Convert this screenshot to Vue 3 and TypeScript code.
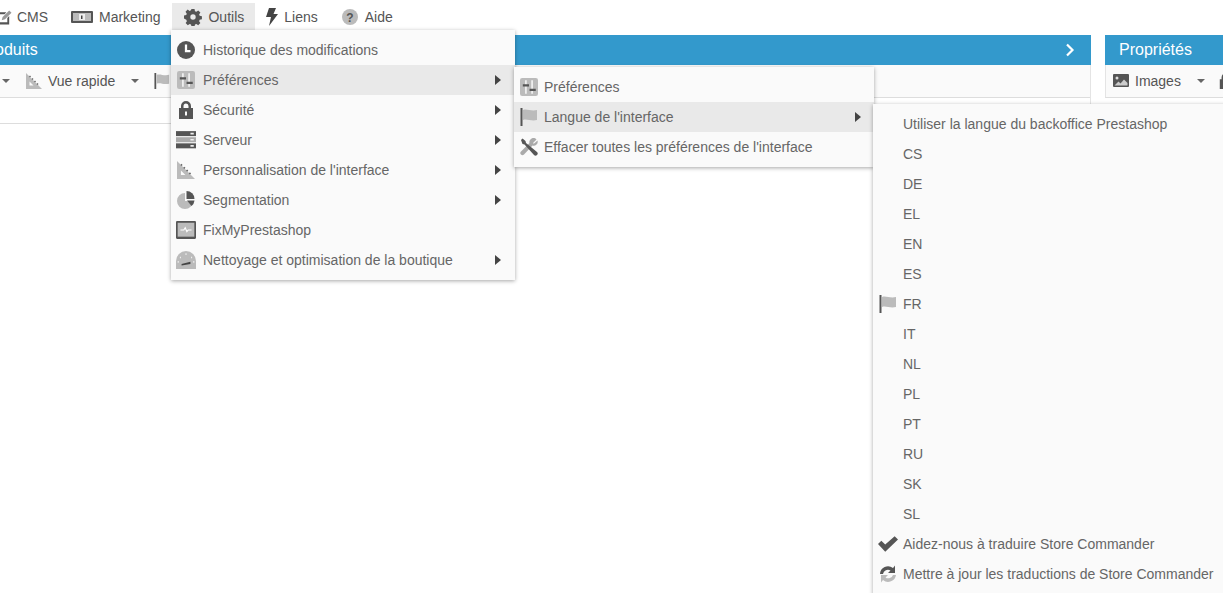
<script setup lang="ts">
interface Row { label: string; icon?: string; more?: boolean; active?: boolean }
const navItems: Row[] = [
  { label: 'CMS', icon: 'edit' },
  { label: 'Marketing', icon: 'money' },
  { label: 'Outils', icon: 'gear', active: true },
  { label: 'Liens', icon: 'bolt' },
  { label: 'Aide', icon: 'help' },
]
const toolsMenu: Row[] = [
  { label: 'Historique des modifications', icon: 'clock' },
  { label: 'Préférences', icon: 'prefs', more: true, active: true },
  { label: 'Sécurité', icon: 'lock', more: true },
  { label: 'Serveur', icon: 'server', more: true },
  { label: "Personnalisation de l'interface", icon: 'ruler', more: true },
  { label: 'Segmentation', icon: 'pie', more: true },
  { label: 'FixMyPrestashop', icon: 'monitor' },
  { label: 'Nettoyage et optimisation de la boutique', icon: 'gauge', more: true },
]
const prefsMenu: Row[] = [
  { label: 'Préférences', icon: 'prefs' },
  { label: "Langue de l'interface", icon: 'flag', more: true, active: true },
  { label: "Effacer toutes les préférences de l'interface", icon: 'tools' },
]
const langMenu: Row[] = [
  { label: 'Utiliser la langue du backoffice Prestashop' },
  ...['CS', 'DE', 'EL', 'EN', 'ES'].map((label) => ({ label })),
  { label: 'FR', icon: 'flag' },
  ...['IT', 'NL', 'PL', 'PT', 'RU', 'SK', 'SL'].map((label) => ({ label })),
  { label: 'Aidez-nous à traduire Store Commander', icon: 'check' },
  { label: 'Mettre à jour les traductions de Store Commander', icon: 'refresh' },
]
const menus = [
  { cls: 'menu-tools', rows: toolsMenu },
  { cls: 'menu-prefs', rows: prefsMenu },
  { cls: 'menu-lang', rows: langMenu },
]
</script>

<template>
  <div class="page">
    <svg class="defs" width="0" height="0" aria-hidden="true">
      <symbol id="edit" viewBox="0 0 16 16">
        <path d="M0 3h10L8 5H2.500v8.500H11V9l2-2v9H0z" fill="#555" />
        <path d="M6 8l7-7 2.500 2.500-7 7-3.500 1z" fill="#999" />
      </symbol>
      <symbol id="money" viewBox="0 0 22 14">
        <rect x="0" y="1" width="22" height="12" rx="1" fill="#555" />
        <rect x="2" y="3" width="18" height="8" fill="#bbb" />
        <rect x="8" y="4" width="6" height="6" fill="#eee" />
        <path d="M10 5.500h1.500V9H10z" fill="#444" />
      </symbol>
      <symbol id="gear" viewBox="0 0 18 18">
        <path fill="#555" fill-rule="evenodd" d="M7.300 0h3.400l.5 2.500 1.500.6 2.100-1.400 2.400 2.400-1.400 2.100.6 1.500 2.500.5v3.400l-2.500.5-.6 1.500 1.400 2.100-2.400 2.400-2.100-1.400-1.500.6-.5 2.500H7.300l-.5-2.500-1.500-.6-2.100 1.400-2.400-2.400 1.400-2.100-.6-1.500L-1 10.700V7.300l2.500-.5.600-1.500-1.400-2.100 2.400-2.400 2.100 1.400 1.500-.6zM9 6a3 3 0 100 6 3 3 0 000-6z" transform="translate(.9 .9) scale(.9)" />
      </symbol>
      <symbol id="bolt" viewBox="0 0 12 18">
        <path d="M3 0h7L7.500 6H12L3 18l2-9H0z" fill="#444" />
      </symbol>
      <symbol id="help" viewBox="0 0 16 16">
        <circle cx="8" cy="8" r="8" fill="#bbb" />
        <text x="8" y="12.500" text-anchor="middle" font-family="Liberation Sans, sans-serif" font-weight="700" font-size="12" fill="#555">?</text>
      </symbol>
      <symbol id="clock" viewBox="0 0 16 16">
        <circle cx="8" cy="8" r="8" fill="#555" />
        <path d="M7 3h2v5h3v2H7z" fill="#fff" />
      </symbol>
      <symbol id="prefs" viewBox="0 0 16 16">
        <rect width="16" height="16" rx="2" fill="#bbb" />
        <path d="M4.500 2h1.500v12H4.500zM10 2h1.500v12H10z" fill="#f2f2f2" />
        <path d="M2.500 5.500h5.500v2H2.500zM8.500 9.500H14v2H8.500z" fill="#555" />
      </symbol>
      <symbol id="lock" viewBox="0 0 18 18">
        <path fill="#555" fill-rule="evenodd" d="M4 7V5a5 5 0 0110 0v2h2v11H2V7zM6.500 7h5V5a2.500 2.500 0 00-5 0zM8 10.500v4h2v-4z" />
      </symbol>
      <symbol id="server" viewBox="0 0 18 16">
        <rect y="0" width="18" height="4.500" fill="#555" />
        <rect y="5.500" width="18" height="4.500" fill="#aaa" />
        <rect y="11" width="18" height="4.500" fill="#555" />
        <path d="M13 1.500h3v1.500h-3zM13 7h3v1.500h-3zM13 12.500h3V14h-3z" fill="#eee" />
      </symbol>
      <symbol id="ruler" viewBox="0 0 16 16">
        <path fill="#bbb" fill-rule="evenodd" d="M0 0l16 16H0zM3.500 8.500v4h4z" />
        <path d="M3 3.500l1-1 1 1-1 1zM5.500 6l1-1 1 1-1 1zM8 8.500l1-1 1 1-1 1zM10.500 11l1-1 1 1-1 1z" fill="#666" />
      </symbol>
      <symbol id="pie" viewBox="0 0 18 18">
        <path d="M8 2a8 8 0 108 8H8z" fill="#bbb" />
        <path d="M9.500 0a8 8 0 018 8h-8z" fill="#555" />
        <path d="M10 9.500h7.500a8 8 0 01-3 5.500z" fill="#555" />
      </symbol>
      <symbol id="monitor" viewBox="0 0 18 16">
        <rect width="18" height="16" rx="1" fill="#555" />
        <rect x="1.500" y="1.500" width="15" height="12.500" fill="#bbb" />
        <path d="M4 8h3l1.300-2 1.500 3.500L11 8h3" stroke="#fff" fill="none" />
      </symbol>
      <symbol id="gauge" viewBox="0 0 18 16">
        <path d="M0 16V9a9 9 0 0118 0v7z" fill="#bbb" />
        <path d="M5 11.500l8-2v2l-8 1.500z" fill="#444" />
        <path d="M8.500 2h1v1.500h-1zM3.500 5h1v1.500h-1zM13.500 5h1v1.500h-1zM1.500 9h1v1.500h-1zM15.500 9h1v1.500h-1z" fill="#eee" />
      </symbol>
      <symbol id="flag" viewBox="0 0 18 18">
        <rect x="0.500" y="0" width="2" height="18" fill="#555" />
        <path d="M3 2c4-1.500 8 1.500 14 0v10c-6 1.500-10-1.500-14 0z" fill="#bbb" />
      </symbol>
      <symbol id="tools" viewBox="0 0 18 18">
        <path d="M16.500 1.500L13 5l.8.8 3.700-3.200a4 4 0 01-5 5L4 16.500a2 2 0 01-3-3l8.500-8.500a4 4 0 017-3.500z" fill="#aaa" />
        <path d="M1 2l1.500-1.500 3 2.500.5 2L17 14a2 2 0 01-3 3L4.500 6.500l-2-.5z" fill="#555" />
      </symbol>
      <symbol id="check" viewBox="0 0 18 14">
        <path d="M0 7l3-3 3.500 3.500L15 0l3 3L6.500 14z" fill="#555" />
      </symbol>
      <symbol id="refresh" viewBox="0 0 18 18">
        <path d="M1 9A8 8 0 0114 3l2-2.500V8H9l2.500-2.500A5 5 0 004 9z" fill="#555" />
        <path d="M17 10A8 8 0 014 15l-2 2.500V10h7l-2.500 2.500A5 5 0 0014 10z" fill="#bbb" />
      </symbol>
      <symbol id="image" viewBox="0 0 16 14">
        <rect width="16" height="13" rx="1" fill="#555" />
        <circle cx="4" cy="4" r="1.500" fill="#ddd" />
        <path d="M1.500 11.500l4-4 2 2 3.500-4 3.500 3.500v2.500z" fill="#ccc" />
      </symbol>
    </svg>

    <nav class="navbar">
      <div v-for="item in navItems" :key="item.label" class="nav-item" :class="[`nav-${item.icon}`, { active: item.active }]">
        <svg class="nav-icon"><use :href="`#${item.icon}`" /></svg>
        <span>{{ item.label }}</span>
      </div>
    </nav>

    <main class="panels">
      <section class="panel panel-main">
        <header class="panel-head">
          <span>Produits</span>
          <svg class="chevron" viewBox="0 0 10 14"><path d="M2 1.500l5.500 5.500L2 12.500" fill="none" stroke="#fff" stroke-width="2.200" /></svg>
        </header>
        <div class="toolbar">
          <i class="caret first" />
          <svg class="tool-icon ruler"><use href="#ruler" /></svg>
          <span>Vue rapide</span>
          <i class="caret" />
          <svg class="tool-icon flag"><use href="#flag" /></svg>
        </div>
        <div class="grid-head" />
      </section>
      <section class="panel panel-side">
        <header class="panel-head"><span>Propriétés</span></header>
        <div class="toolbar">
          <svg class="tool-icon"><use href="#image" /></svg>
          <span>Images</span>
          <i class="caret" />
          <svg class="tool-icon last"><use href="#lock" /></svg>
        </div>
      </section>
    </main>

    <ul v-for="menu in menus" :key="menu.cls" class="menu" :class="menu.cls">
      <li v-for="row in menu.rows" :key="row.label" class="row" :class="{ active: row.active }">
        <span class="row-icon"><svg v-if="row.icon"><use :href="`#${row.icon}`" /></svg></span>
        <span class="row-label">{{ row.label }}</span>
        <i v-if="row.more" class="arrow" />
      </li>
    </ul>
  </div>
</template>

<style>
html, body { margin: 0; overflow: hidden; background: #fff; }
</style>

<style scoped>
.page {
  position: relative;
  width: 1223px;
  height: 593px;
  overflow: hidden;
  background: #fff;
  font: 14px/1 "Liberation Sans", Arial, sans-serif;
  color: #555;
}
.defs { position: absolute; }
.navbar {
  display: flex;
  height: 27px;
  padding-top: 3px;
  margin-left: -12px;
}
.nav-item {
  display: flex;
  align-items: center;
  gap: 6px;
  height: 27px;
  padding: 0 11px;
  box-sizing: border-box;
}
.nav-item.active { background: #eaeaea; padding-left: 12px; }
.nav-icon { width: 16px; height: 16px; flex: none; }
.nav-edit { width: 71px; padding-left: 9px; gap: 5px; }
.nav-edit .nav-icon { width: 15px; }
.nav-money { margin-left: 1px; padding-right: 12px; }
.nav-money .nav-icon { width: 22px; height: 14px; }
.nav-gear .nav-icon { width: 18px; height: 18px; }
.nav-bolt .nav-icon { width: 12px; height: 18px; }
.nav-help { margin-left: 2px; }
.nav-help span { margin-left: 1px; }

.panels {
  display: flex;
  gap: 14px;
  margin-top: 5px;
  margin-left: -39px;
}
.panel-main { width: 1130px; flex: none; border-right: 1px solid #e4e4e4; box-sizing: border-box; }
.panel-side { width: 200px; flex: none; }
.panel-head {
  display: flex;
  align-items: center;
  justify-content: space-between;
  height: 30px;
  padding: 0 14px;
  background: #3399cc;
  color: #fff;
  font-size: 16px;
}
.panel-main .panel-head { padding-left: 18px; margin-right: -1px; }
.chevron { width: 10px; height: 14px; margin-right: 2px; }
.toolbar {
  display: flex;
  align-items: center;
  height: 32px;
  background: #fafafa;
  border-bottom: 1px solid #ddd;
  box-sizing: content-box;
  color: #555;
}
.panel-side .toolbar { padding-left: 7px; border-left: 1px solid #e4e4e4; }
.tool-icon { width: 16px; height: 16px; flex: none; margin-right: 6px; }
.tool-icon.ruler { margin-left: 16px; }
.tool-icon.flag { margin-left: 15px; }
.tool-icon.last { margin-left: 13px; }
.caret {
  width: 0;
  height: 0;
  margin-left: 16px;
  border-left: 4px solid transparent;
  border-right: 4px solid transparent;
  border-top: 4px solid #666;
}
.caret.first { margin-left: 41px; }
.grid-head { height: 25px; border-bottom: 1px solid #ddd; }

.menu {
  position: absolute;
  margin: 0;
  padding: 5px 0;
  list-style: none;
  background: #fafafa;
  box-shadow: 0 1px 4px rgba(0, 0, 0, 0.35);
  color: #666;
}
.menu-tools { left: 171px; top: 30px; width: 344px; height: 240px; }
.menu-prefs { left: 514px; top: 67px; width: 360px; height: 90px; }
.menu-lang { left: 873px; top: 104px; width: 360px; height: 490px; }
.row { display: flex; align-items: center; height: 30px; }
.row.active { background: #e9e9e9; }
.row-icon { display: flex; width: 32px; padding-left: 5px; box-sizing: border-box; flex: none; }
.row-icon svg { width: 20px; height: 18px; }
.menu-prefs .row-icon, .menu-lang .row-icon { width: 30px; }
.row-label { flex: 1; white-space: nowrap; }
.arrow {
  width: 0;
  height: 0;
  margin-right: 14px;
  border-top: 5px solid transparent;
  border-bottom: 5px solid transparent;
  border-left: 6px solid #444;
}
.menu-prefs .arrow { margin-right: 13px; }
</style>
